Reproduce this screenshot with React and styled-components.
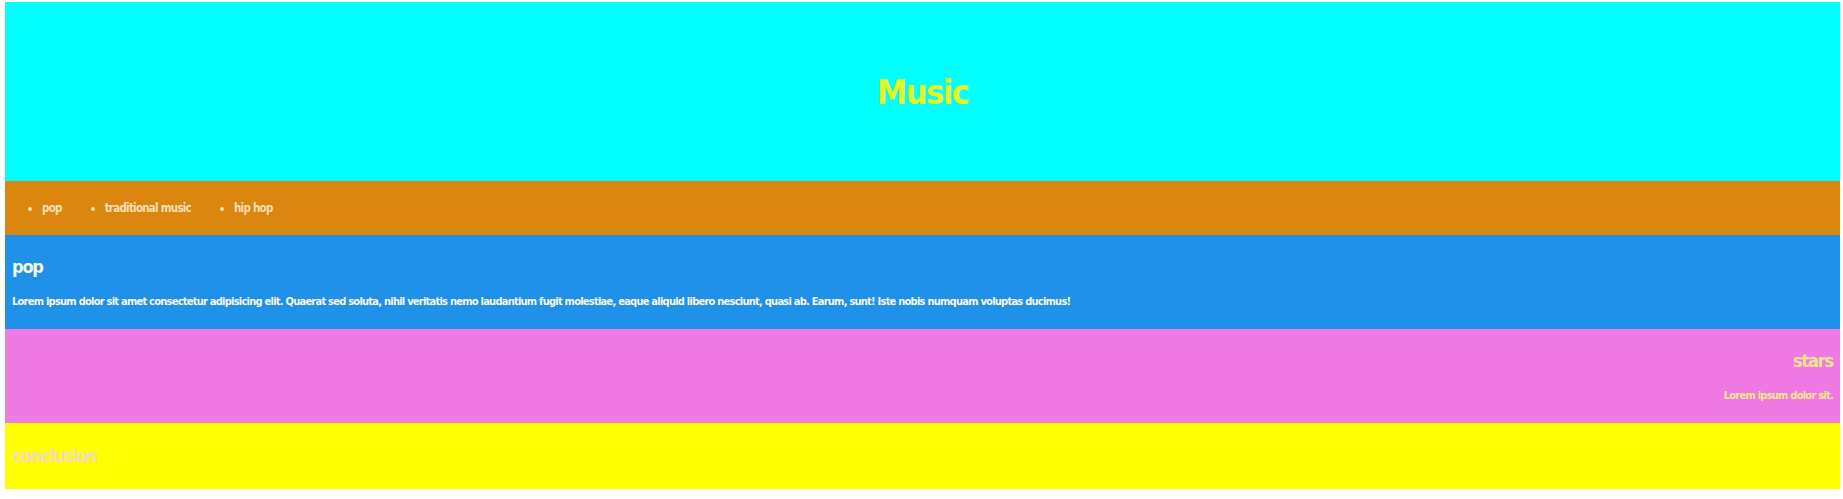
import React from "react";
import styled, { createGlobalStyle } from "styled-components";

const Global = createGlobalStyle`
  html, body { margin: 0; padding: 0; background: #ffffff; }
  body { font-family: "DejaVu Sans Condensed", "DejaVu Sans", sans-serif; font-stretch: condensed; font-weight: 700; }
  * { box-sizing: border-box; }
`;

const Page = styled.div`
  margin: 2px 3px 10px 5px;
  display: flex;
  flex-direction: column;
`;

const Header = styled.header`
  height: 179px;
  background: #00ffff;
  display: flex;
  align-items: center;
  justify-content: center;
`;

const Title = styled.h1`
  margin: 0;
  font-size: 34px;
  line-height: 44px;
  letter-spacing: -1.5px;
  color: #e4f520;
  font-weight: 700;
`;

const Nav = styled.nav`
  height: 54px;
  background: #db870f;
  display: flex;
  align-items: center;
`;

const NavList = styled.ul`
  margin: 0;
  padding: 0 0 0 37px;
  display: flex;
  gap: 43px;
  list-style: disc;
  color: #f7dfb5;
`;

const NavItem = styled.li`
  font-size: 11.5px;
  line-height: 16px;
  letter-spacing: -0.75px;
`;

const Section = styled.section`
  background: ${(p) => p.$bg};
  color: ${(p) => p.$color};
  text-align: ${(p) => p.$align || "left"};
  padding: ${(p) => (p.$compact ? "22px 7px" : "21px 7px 19px")};
  display: flex;
  flex-direction: column;
  gap: 16px;
`;

const Heading = styled.h2`
  margin: 0;
  font-size: 18px;
  line-height: 22px;
  letter-spacing: -1.2px;
  color: ${(p) => p.$color || "inherit"};
`;

const Text = styled.p`
  margin: 0;
  font-size: 11px;
  line-height: 16px;
  letter-spacing: -0.75px;
`;

export default function App() {
  return (
    <>
      <Global />
      <Page>
        <Header>
          <Title>Music</Title>
        </Header>
        <Nav>
          <NavList>
            <NavItem>pop</NavItem>
            <NavItem>traditional music</NavItem>
            <NavItem>hip hop</NavItem>
          </NavList>
        </Nav>
        <Section $bg="#1f91e8" $color="#fbf6e6">
          <Heading $color="#f3f5d8">pop</Heading>
          <Text>
            Lorem ipsum dolor sit amet consectetur adipisicing elit. Quaerat sed soluta, nihil veritatis nemo laudantium fugit molestiae, eaque aliquid libero nesciunt, quasi ab. Earum, sunt! Iste nobis numquam voluptas ducimus!
          </Text>
        </Section>
        <Section $bg="#f07ae3" $color="#f0e68c" $align="right">
          <Heading>stars</Heading>
          <Text>Lorem ipsum dolor sit.</Text>
        </Section>
        <Section $bg="#ffff00" $color="#f5deb3" $compact>
          <Heading>conclusion</Heading>
        </Section>
      </Page>
    </>
  );
}
